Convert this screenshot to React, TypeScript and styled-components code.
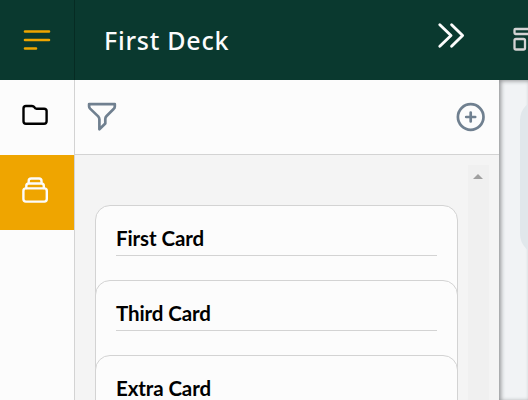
import React from 'react';
import styled, { createGlobalStyle } from 'styled-components';

const GlobalStyle = createGlobalStyle`
  * { box-sizing: border-box; }
  html, body { margin: 0; height: 400px; overflow: hidden; background: #f1f3f5; }
  button { border: 0; padding: 0; background: none; display: block; color: inherit; }
  svg { display: block; fill: none; stroke: currentColor; stroke-linecap: round; stroke-linejoin: round; }
`;

const Page = styled.div`
  width: 528px;
  height: 400px;
  overflow: hidden;
  display: flex;
  flex-direction: column;
  font-family: Lato, sans-serif;
`;

const Header = styled.header`
  height: 80px;
  flex: none;
  display: flex;
  background: #0a392f;
  color: #fcfcfc;
`;

const MenuButton = styled.button`
  width: 75px;
  height: 80px;
  flex: none;
  color: #efa500;
  border-right: 1px solid #062b23;
`;

const DeckTitle = styled.h1`
  margin: 0;
  padding-left: 29px;
  width: 355px;
  flex: none;
  font: 500 25px/80px 'Noto Sans', sans-serif;
  letter-spacing: 0.75px;
  white-space: nowrap;
`;

const HeaderButton = styled.button<{ $color: string; $width: number }>`
  width: ${({ $width }) => $width}px;
  height: 80px;
  flex: none;
  overflow: hidden;
  color: ${({ $color }) => $color};
`;

const Body = styled.div`
  flex: 1;
  min-height: 0;
  display: flex;
`;

const Rail = styled.nav`
  width: 75px;
  flex: none;
  background: #fcfcfc;
  border-right: 1px solid #d3d3d3;
`;

const RailButton = styled.button<{ $active?: boolean }>`
  width: 74px;
  height: 75px;
  color: ${({ $active }) => ($active ? '#fcfcfc' : '#000')};
  background: ${({ $active }) => ($active ? '#efa500' : 'transparent')};
`;

const Panel = styled.section`
  width: 424px;
  flex: none;
  display: flex;
  flex-direction: column;
  background: #f4f4f4;
`;

const Toolbar = styled.div`
  height: 75px;
  flex: none;
  display: flex;
  justify-content: space-between;
  background: #fcfcfc;
  border-bottom: 1px solid #d3d3d3;
  color: #708090;
`;

const Scroller = styled.div`
  flex: 1;
  min-height: 0;
  display: flex;
  justify-content: space-between;
  padding: 10px 10px 0 20px;
  overflow: hidden;
`;

const CardStack = styled.div`
  width: 363px;
  padding-top: 40px;
`;

const Card = styled.article`
  height: 125px;
  padding: 14px 20px;
  border: 1px solid #d3d3d3;
  border-radius: 15px;
  background: #fcfcfc;
  & + & { margin-top: -50px; }
`;

const CardTitle = styled.h2`
  margin: 0;
  height: 36px;
  border-bottom: 1px solid #d3d3d3;
  color: #000;
  font: 700 20.5px/36px Lato, sans-serif;
  letter-spacing: -0.1px;
  white-space: nowrap;
`;

const ScrollTrack = styled.div`
  width: 21px;
  padding: 9px 5px;
  background: #f0f0f0;
`;

const Workspace = styled.main`
  flex: 1;
  min-width: 0;
  padding: 20px 0 0 21px;
  overflow: hidden;
  background: #f1f3f5;
  box-shadow: inset 2px 1px 4px #929496;
`;

const WorkspaceTile = styled.div`
  width: 150px;
  height: 154px;
  border-radius: 20px;
  background: #e1e7eb;
`;

const cards = ['First Card', 'Third Card', 'Extra Card'];

export default function App() {
  return (
    <>
      <GlobalStyle />
      <Page>
        <Header>
          <MenuButton aria-label="Menu">
            <svg width="74" height="80" strokeWidth="2.6">
              <path d="M25 31.5H49M25 40H49M25 48.5H36" />
            </svg>
          </MenuButton>
          <DeckTitle>First Deck</DeckTitle>
          <HeaderButton aria-label="Expand" $color="#fcfcfc" $width={70}>
            <svg width="70" height="80" strokeWidth="2.9">
              <path d="M9.8 24.8 21 35.5 9.8 46.2M21.6 24.8 32.6 35.5 21.6 46.2" />
            </svg>
          </HeaderButton>
          <HeaderButton aria-label="Layout" $color="#d3d3d3" $width={28}>
            <svg width="40" height="80" strokeWidth="2.3">
              <rect x="14.5" y="29" width="23" height="5" rx="1" />
              <rect x="14.5" y="39" width="10.5" height="10.5" rx="1.5" />
            </svg>
          </HeaderButton>
        </Header>
        <Body>
          <Rail>
            <RailButton aria-label="Folders">
              <svg width="74" height="75" strokeWidth="2.4">
                <path d="M23.5 28.5Q23.5 26 26 26H32Q33.5 26 34.2 27Q35 28.7 36.5 28.7H44Q46.6 28.7 46.6 31V41.3Q46.6 43.8 44 43.8H26Q23.5 43.8 23.5 41.3Z" />
              </svg>
            </RailButton>
            <RailButton $active aria-label="Decks">
              <svg width="74" height="75" strokeWidth="2.4">
                <rect x="23.4" y="33.4" width="23.4" height="13.2" rx="2.5" />
                <path d="M26.3 33V31Q26.3 28.5 28.7 28.5H41.4Q43.8 28.5 43.8 31V33M28.7 28V26Q28.7 23.5 31.2 23.5H39Q41.5 23.5 41.5 26V28" />
              </svg>
            </RailButton>
          </Rail>
          <Panel>
            <Toolbar>
              <button aria-label="Filter">
                <svg width="60" height="74" strokeWidth="2.7">
                  <path d="M14.1 24.1H39.8V26.5Q39.8 28 38.6 29L31.6 36Q30.3 37.3 30.3 39V43.5L24.4 49.2V39.5Q24.4 37.8 23.2 36.4L15.1 28.6Q14.1 27.5 14.1 26.3Z" />
                </svg>
              </button>
              <button aria-label="Add card">
                <svg width="49" height="74" strokeWidth="2.7">
                  <circle cx="20.7" cy="37" r="12.8" />
                  <path d="M16.2 37H25.2M20.7 32.5V41.5" />
                </svg>
              </button>
            </Toolbar>
            <Scroller>
              <CardStack>
                {cards.map((name) => (
                  <Card key={name}>
                    <CardTitle>{name}</CardTitle>
                  </Card>
                ))}
              </CardStack>
              <ScrollTrack>
                <svg width="10" height="5" stroke="none">
                  <path d="M0 5 5 0 10 5Z" fill="#a0a0a0" stroke="none" />
                </svg>
              </ScrollTrack>
            </Scroller>
          </Panel>
          <Workspace>
            <WorkspaceTile />
          </Workspace>
        </Body>
      </Page>
    </>
  );
}
